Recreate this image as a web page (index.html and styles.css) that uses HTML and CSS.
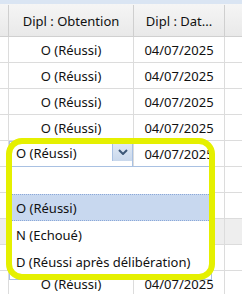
FILE: index.html
```html
<!DOCTYPE html>
<html lang="fr">
<head>
    <meta charset="UTF-8">
    <title>Diplômes</title>
    <link rel="stylesheet" href="styles.css">
</head>
<body>
    <div class="grid">
        <div class="topbar"></div>
        <div class="row header">
            <div class="cell c1"></div>
            <div class="cell c2">Dipl : Obtention</div>
            <div class="cell c3">Dipl : Dat...</div>
            <div class="cell c4"></div>
        </div>
        <div class="row">
            <div class="cell c1"></div><div class="cell c2">O (Réussi)</div><div class="cell c3">04/07/2025</div><div class="cell c4"></div>
        </div>
        <div class="row">
            <div class="cell c1"></div><div class="cell c2">O (Réussi)</div><div class="cell c3">04/07/2025</div><div class="cell c4"></div>
        </div>
        <div class="row">
            <div class="cell c1"></div><div class="cell c2">O (Réussi)</div><div class="cell c3">04/07/2025</div><div class="cell c4"></div>
        </div>
        <div class="row">
            <div class="cell c1"></div><div class="cell c2">O (Réussi)</div><div class="cell c3">04/07/2025</div><div class="cell c4"></div>
        </div>
        <div class="row editing">
            <div class="cell c1"></div>
            <div class="cell c2">
                <div class="combo">
                    <span class="combo-text">O (Réussi)</span>
                    <span class="combo-btn">
                        <svg width="10" height="6" viewBox="0 0 10 6"><path d="M1 1 L5 5 L9 1" fill="none" stroke="#3d5878" stroke-width="2"/></svg>
                    </span>
                </div>
            </div>
            <div class="cell c3">04/07/2025</div><div class="cell c4"></div>
        </div>
        <div class="row">
            <div class="cell c1"></div><div class="cell c2"></div><div class="cell c3"></div><div class="cell c4"></div>
        </div>
        <div class="row">
            <div class="cell c1"></div><div class="cell c2"></div><div class="cell c3"></div><div class="cell c4"></div>
        </div>
        <div class="row shaded">
            <div class="cell c1"></div><div class="cell c2"></div><div class="cell c3"></div><div class="cell c4"></div>
        </div>
        <div class="row">
            <div class="cell c1"></div><div class="cell c2"></div><div class="cell c3"></div><div class="cell c4"></div>
        </div>
        <div class="row">
            <div class="cell c1"></div><div class="cell c2">O (Réussi)</div><div class="cell c3">04/07/2025</div><div class="cell c4"></div>
        </div>
    </div>

    <div class="dropdown">
        <div class="item"></div>
        <div class="item selected">O (Réussi)</div>
        <div class="item">N (Echoué)</div>
        <div class="item">D (Réussi après délibération)</div>
    </div>

    <div class="highlight"></div>
</body>
</html>
```

FILE: styles.css
```css
body {
    margin: 0;
    font-family: "Noto Sans", sans-serif;
    font-size: 13px;
    color: #111;
    background: #fff;
    overflow: hidden;
}
.grid {
    width: 242px;
}
.topbar {
    height: 4px;
    background-color: #dae5f3;
}
.row {
    display: flex;
    height: 26px;
    box-sizing: border-box;
    border-bottom: 1px solid #dcdcdc;
}
.row.shaded {
    background-color: #eeeeee;
}
.header {
    height: 33px;
    padding-top: 1px;
    background: linear-gradient(#f5f5f5, #e9e9e9);
    border-bottom: 1px solid #d0d0d0;
}
.cell {
    display: flex;
    align-items: center;
    justify-content: center;
    border-right: 1px solid #dcdcdc;
    white-space: nowrap;
    overflow: hidden;
}
.header .cell {
    border-right-color: #cfcfcf;
}
.c1 {
    width: 8px;
}
.c2 {
    width: 124px;
}
.c3 {
    width: 90px;
}
.c4 {
    flex: 1;
    border-right: none;
}
.editing .c2 {
    align-items: stretch;
}
.combo {
    flex: 1;
    display: flex;
    align-items: flex-start;
    border: 1px solid #a9c1e2;
    border-bottom: none;
    background: #fff;
}
.combo-text {
    flex: 1;
    padding-left: 6px;
    line-height: 22px;
}
.combo-btn {
    width: 19px;
    height: 19px;
    display: flex;
    align-items: center;
    justify-content: center;
    background: linear-gradient(#e3ebf6, #c9d8ec);
    border-left: 1px solid #a9c1e2;
}
.dropdown {
    position: absolute;
    left: 9px;
    top: 166px;
    width: 201px;
    height: 112px;
    background: #fff;
    border: 1px solid #a9c1e2;
}
.item {
    height: 27px;
    line-height: 26px;
    padding-left: 5px;
    box-sizing: border-box;
    border: 1px dotted transparent;
}
.item.selected {
    background-color: #c8d8ef;
    border-color: #8ba8d8;
}
.highlight {
    position: absolute;
    left: 6px;
    top: 138px;
    width: 197px;
    height: 130px;
    border: 6px solid #e5f000;
    border-radius: 16px;
}
```
